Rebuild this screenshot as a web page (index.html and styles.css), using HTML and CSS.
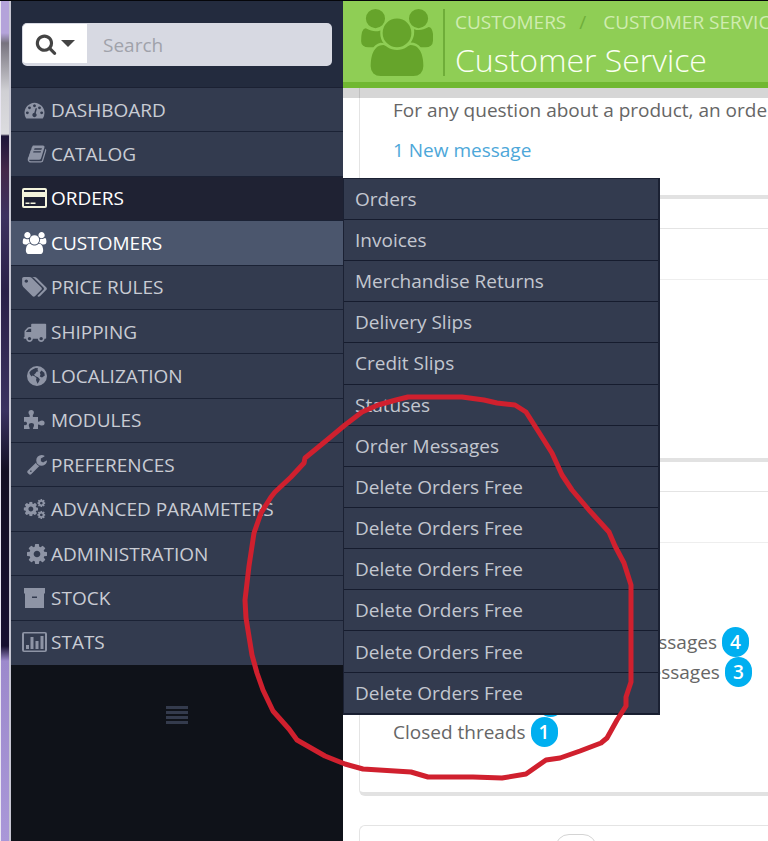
FILE: index.html
```html
<!DOCTYPE html>
<html lang="en">
<head>
<meta charset="utf-8">
<title>Customer Service</title>
<link rel="stylesheet" href="styles.css">
</head>
<body>
<svg class="defs" aria-hidden="true">
  <symbol id="i-search" viewBox="0 0 1792 1792"><path d="M1216 832q0-185-131.500-316.500t-316.500-131.500-316.500 131.500-131.500 316.500 131.500 316.500 316.500 131.500 316.500-131.500 131.500-316.500zm512 832q0 52-38 90t-90 38q-54 0-90-38l-343-342q-179 124-399 124-143 0-273.500-55.500t-225-150-150-225-55.500-273.500 55.500-273.500 150-225 225-150 273.500-55.500 273.500 55.500 225 150 150 225 55.500 273.500q0 220-124 399l343 343q37 37 37 90z"/></symbol>
  <symbol id="i-dashboard" viewBox="0 0 1792 1792"><path d="M384 1152q0-53-37.500-90.500t-90.500-37.500-90.500 37.500-37.500 90.500 37.500 90.500 90.500 37.500 90.500-37.500 37.500-90.500zm192-448q0-53-37.500-90.500t-90.500-37.500-90.500 37.500-37.500 90.500 37.500 90.500 90.500 37.500 90.500-37.500 37.500-90.500zm428 481l101-382q6-26-7.500-48.500t-38.500-29.500-48 6.500-30 39.500l-101 382q-60 5-107 43.500t-63 98.500q-20 77 20 146t117 89 146-20 89-117q16-60-6-117t-72-91zm660-33q0-53-37.500-90.500t-90.500-37.500-90.500 37.500-37.500 90.500 37.500 90.500 90.500 37.500 90.500-37.500 37.500-90.500zm-640-640q0-53-37.500-90.500t-90.500-37.500-90.500 37.500-37.500 90.500 37.500 90.500 90.500 37.500 90.500-37.500 37.500-90.500zm448 192q0-53-37.500-90.500t-90.500-37.500-90.500 37.500-37.500 90.500 37.500 90.500 90.500 37.500 90.500-37.500 37.500-90.500zm320 448q0 261-141 483-19 29-54 29h-1402q-35 0-54-29-141-221-141-483 0-182 71-348t191-286 286-191 348-71 348 71 286 191 191 286 71 348z"/></symbol>
  <symbol id="i-book" viewBox="0 0 1792 1792"><path d="M1703 478q40 57 18 129l-275 906q-19 64-76.500 107.500t-122.500 43.500h-923q-77 0-148.500-53.500t-99.500-131.500q-24-67-2-127 0-4 3-27t4-37q1-8-3-21.500t-3-19.500q2-11 8-21t16.500-23.500 16.500-23.500q23-38 45-91.500t30-91.500q3-10 .5-30t-.5-28q3-11 17-28t17-23q21-36 42-92t25-90q1-9-2.500-32t.5-28q4-13 22-30.500t22-22.500q19-26 42.500-84.500t27.500-96.500q1-8-3-25.500t-2-26.500q2-8 9-18t18-23 17-21q8-12 16.500-30.500t15-35 16-36 19.500-32 26.500-23.500 36-11.500 47.500 5.500l-1 3q38-9 51-9h761q74 0 114 56t18 130l-274 906q-36 119-71.500 153.500t-128.500 34.500h-869q-27 0-38 15-11 16-1 43 24 70 144 70h923q29 0 56-15.500t35-41.500l300-987q7-22 5-57 38 15 59 43zm-1064 2q-4 13 2 22.500t20 9.500h608q13 0 25.500-9.500t16.500-22.500l21-64q4-13-2-22.500t-20-9.500h-608q-13 0-25.500 9.500t-16.500 22.500zm-83 256q-4 13 2 22.500t20 9.500h608q13 0 25.500-9.500t16.500-22.500l21-64q4-13-2-22.500t-20-9.500h-608q-13 0-25.500 9.500t-16.500 22.500z"/></symbol>
  <symbol id="i-card" viewBox="0 0 25 20"><path fill-rule="evenodd" d="M2 0h21a2 2 0 0 1 2 2v16a2 2 0 0 1-2 2H2a2 2 0 0 1-2-2V2a2 2 0 0 1 2-2zm0 2v2h21V2zm0 7v9h21V9zM3.500 14.500h4V16h-4zm5 0h5V16h-5z"/></symbol>
  <symbol id="i-users" viewBox="64 0 1920 1792"><path d="M657 896q-162 5-265 128h-134q-82 0-138-40.500t-56-118.500q0-353 124-353 6 0 43.500 21t97.500 42.500 119 21.500q67 0 133-23-5 37-5 66 0 159 93 289zm1071 637q0 120-73 189.500t-194 69.500h-874q-121 0-194-69.500t-73-189.500q0-53 3.500-103.500t14-109 26.500-108.500 43-97.500 62-81 85.500-53.500 111.500-20q10 0 43 21.500t73 48 107 48 135 21.500 135-21.500 107-48 73-48 43-21.500q61 0 111.500 20t85.500 53.500 62 81 43 97.500 26.500 108.500 14 109 3.500 103.500zm-1024-1277q0 106-75 181t-181 75-181-75-75-181 75-181 181-75 181 75 75 181zm704 384q0 159-112.500 271.500t-271.500 112.500-271.500-112.500-112.500-271.500 112.500-271.500 271.500-112.500 271.500 112.500 112.500 271.500zm576 225q0 78-56 118.500t-138 40.500h-134q-103-123-265-128 93-130 93-289 0-29-5-66 66 23 133 23 59 0 119-21.500t97.500-42.500 43.500-21q124 0 124 353zm-128-609q0 106-75 181t-181 75-181-75-75-181 75-181 181-75 181 75 75 181z"/></symbol>
  <symbol id="i-tags" viewBox="0 128 1900 1536"><path d="M448 448q0-53-37.500-90.500t-90.500-37.500-90.500 37.500-37.500 90.500 37.500 90.500 90.500 37.500 90.500-37.500 37.500-90.500zm1067 576q0 53-37 90l-491 492q-39 37-91 37-53 0-90-37l-715-716q-38-37-64.500-101t-26.500-117v-416q0-52 38-90t90-38h416q53 0 117 26.500t102 64.500l715 714q37 39 37 91zm384 0q0 53-37 90l-491 492q-39 37-91 37-36 0-59-14t-53-45l470-470q37-37 37-90 0-52-37-91l-715-714q-38-38-102-64.500t-117-26.500h224q53 0 117 26.500t102 64.500l715 714q37 39 37 91z"/></symbol>
  <symbol id="i-truck" viewBox="0 128 1792 1536"><path d="M640 1408q0-52-38-90t-90-38-90 38-38 90 38 90 90 38 90-38 38-90zm-384-512h384v-256h-158q-13 0-22 9l-195 195q-9 9-9 22v30zm1280 512q0-52-38-90t-90-38-90 38-38 90 38 90 90 38 90-38 38-90zm256-1088v1024q0 15-4 26.500t-13.500 18.500-16.500 11.500-23.500 6-22.500 2-25.500 0-22.500-.5q0 106-75 181t-181 75-181-75-75-181h-384q0 106-75 181t-181 75-181-75-75-181h-64q-3 0-22.500.5t-25.500 0-22.500-2-23.500-6-16.500-11.500-13.500-18.500-4-26.500q0-26 19-45t45-19v-320q0-8-.5-35t0-38 2.500-34.500 6.500-37 14-30.500 22.500-30l198-198q19-19 50.500-32t58.500-13h160v-192q0-26 19-45t45-19h1024q26 0 45 19t19 45z"/></symbol>
  <symbol id="i-globe" viewBox="0 0 20 20"><path fill-rule="evenodd" d="M10 0a10 10 0 1 1 0 20a10 10 0 0 1 0-20zM11 2.200L8.500 2 6 3.200 4 4.500 2.400 6.500 3 8.500 4.500 10.500 5.500 9.500 7.500 10.300 9.500 12 9 14 10.500 17.800 12 15.500 12.800 13.200 11 11.200 8.500 10.200 7 8.800 8.600 7.200 9.500 5.800 11.500 5.300 10.500 4zM14.500 4.500L12.800 6.500 13.500 8.500 12.800 10.500 15 11.500 17.800 9.500 17.300 6.800z"/></symbol>
  <symbol id="i-puzzle" viewBox="0 0 21 20"><path d="M0 7h5.500C6.500 5.500 4.500 4.500 4.500 2.600a2.700 2.600 0 0 1 5.400 0C9.900 4.500 8 5.500 9 7h5v4.500c1.300.8 2-.9 4-.9a2.500 2.400 0 0 1 0 5c-2 0-2.700-1.700-4-.9V19H9.200c-.8-1.200.8-2 .8-3.600a2.600 2.400 0 0 0-5.200 0c0 1.600 1.500 2.400.7 3.600H0v-4c1.400.4 3 .3 3-1.500s-1.600-2-3-1.500z"/></symbol>
  <symbol id="i-wrench" viewBox="64 128 1664 1664"><path d="M448 1472q0-26-19-45t-45-19-45 19-19 45 19 45 45 19 45-19 19-45zm644-420l-682 682q-37 37-90 37-52 0-91-37l-106-108q-38-36-38-90 0-53 38-91l681-681q39 98 114.500 173.500t173.500 114.500zm634-435q0 39-23 106-47 134-164.500 217.500t-258.500 83.500q-185 0-316.500-131.500t-131.500-316.500 131.500-316.500 316.500-131.500q58 0 121.500 16.500t107.500 46.500q16 11 16 28t-16 28l-293 169v224l193 107q5-3 79-48.500t135.500-81 70.500-35.500q15 0 23.500 10t8.500 25z"/></symbol>
  <symbol id="i-cog" viewBox="128 128 1536 1536"><path d="M1152 896q0-106-75-181t-181-75-181 75-75 181 75 181 181 75 181-75 75-181zm512-109v222q0 12-8 23t-20 13l-185 28q-19 54-39 91 35 50 107 138 10 12 10 25t-9 23q-27 37-99 108t-94 71q-12 0-26-9l-138-108q-44 23-91 38-16 136-29 186-7 28-36 28h-222q-14 0-24.500-8.500t-11.500-21.500l-28-184q-49-16-90-37l-141 107q-10 9-25 9-14 0-25-11-126-114-165-168-7-10-7-23 0-12 8-23 15-21 51-66.500t54-70.500q-27-50-41-99l-183-27q-13-2-21-12.500t-8-23.500v-222q0-12 8-23t19-13l186-28q14-46 39-92-40-57-107-138-10-12-10-24 0-10 9-23 26-36 98.500-107.500t94.500-71.500q13 0 26 10l138 107q44-23 91-38 16-136 29-186 7-28 36-28h222q14 0 24.500 8.500t11.500 21.500l28 184q49 16 90 37l142-107q9-9 24-9 13 0 25 10 129 119 165 170 7 8 7 22 0 12-8 23-15 21-51 66.500t-54 70.500q26 50 41 98l183 28q13 2 21 12.500t8 23.500z"/></symbol>
  <symbol id="i-cogs" viewBox="0 0 24 22"><use href="#i-cog" x="0" y="3" width="16" height="16"/><use href="#i-cog" x="15" y="0" width="9" height="9"/><use href="#i-cog" x="15" y="13" width="9" height="9"/></symbol>
  <symbol id="i-archive" viewBox="0 0 21 20"><path fill-rule="evenodd" d="M0 0h21v5.500H20V20H1V5.500H0zM8 8.500v1.600h5V8.500z"/></symbol>
  <symbol id="i-stats" viewBox="0 0 25 20"><path fill-rule="evenodd" d="M2 0h21a2 2 0 0 1 2 2v16a2 2 0 0 1-2 2H2a2 2 0 0 1-2-2V2a2 2 0 0 1 2-2zm0 1.500v17h21v-17zM4 13h3v4H4zm4.500-8h3v12h-3zm5 4h3v8h-3zm5-5h3v13h-3z"/></symbol>
</svg>

<div class="screen">
  <div class="desktop-edge"></div>

  <aside class="sidebar">
    <form class="search" role="search">
      <button class="search-scope" type="button" aria-label="Search scope">
        <svg class="search-icon"><use href="#i-search"/></svg>
        <span class="caret"></span>
      </button>
      <input class="search-input" type="search" placeholder="Search" aria-label="Search">
    </form>

    <nav aria-label="Main">
      <ul class="menu">
        <li><a href="#"><svg class="icon"><use href="#i-dashboard"/></svg>DASHBOARD</a></li>
        <li><a href="#"><svg class="icon small"><use href="#i-book"/></svg>CATALOG</a></li>
        <li class="open"><a href="#"><svg class="icon"><use href="#i-card"/></svg>ORDERS</a>
          <ul class="submenu">
            <li><a href="#">Orders</a></li>
            <li><a href="#">Invoices</a></li>
            <li><a href="#">Merchandise Returns</a></li>
            <li><a href="#">Delivery Slips</a></li>
            <li><a href="#">Credit Slips</a></li>
            <li><a href="#">Statuses</a></li>
            <li><a href="#">Order Messages</a></li>
            <li><a href="#">Delete Orders Free</a></li>
            <li><a href="#">Delete Orders Free</a></li>
            <li><a href="#">Delete Orders Free</a></li>
            <li><a href="#">Delete Orders Free</a></li>
            <li><a href="#">Delete Orders Free</a></li>
            <li><a href="#">Delete Orders Free</a></li>
          </ul>
        </li>
        <li class="current"><a href="#"><svg class="icon"><use href="#i-users"/></svg>CUSTOMERS</a></li>
        <li><a href="#"><svg class="icon"><use href="#i-tags"/></svg>PRICE RULES</a></li>
        <li><a href="#"><svg class="icon"><use href="#i-truck"/></svg>SHIPPING</a></li>
        <li><a href="#"><svg class="icon small"><use href="#i-globe"/></svg>LOCALIZATION</a></li>
        <li><a href="#"><svg class="icon"><use href="#i-puzzle"/></svg>MODULES</a></li>
        <li><a href="#"><svg class="icon small"><use href="#i-wrench"/></svg>PREFERENCES</a></li>
        <li><a href="#"><svg class="icon"><use href="#i-cogs"/></svg>ADVANCED PARAMETERS</a></li>
        <li><a href="#"><svg class="icon small"><use href="#i-cog"/></svg>ADMINISTRATION</a></li>
        <li><a href="#"><svg class="icon"><use href="#i-archive"/></svg>STOCK</a></li>
        <li><a href="#"><svg class="icon"><use href="#i-stats"/></svg>STATS</a></li>
      </ul>
    </nav>
    <button class="collapse" type="button" aria-label="Collapse menu"><span></span><span></span><span></span><span></span></button>
  </aside>

  <main class="main">
    <header class="page-head">
      <svg class="head-icon"><use href="#i-users"/></svg>
      <div class="head-text">
        <ol class="crumbs">
          <li><a href="#">CUSTOMERS</a></li>
          <li class="slash">/</li>
          <li><a href="#">CUSTOMER SERVICE</a></li>
        </ol>
        <h1>Customer Service</h1>
      </div>
    </header>

    <div class="panels">
      <section class="panel intro">
        <p>For any question about a product, an order</p>
        <p><a href="#">1 New message</a></p>
      </section>
      <section class="panel middle"><div class="panel-head"></div></section>
      <section class="panel stats">
        <div class="panel-head"></div>
        <div class="stats-body">
          <ul class="threads">
            <li><span class="badge"></span></li>
            <li>Closed threads <span class="badge">1</span></li>
          </ul>
          <ul class="messages">
            <li>customer messages <span class="badge">4</span></li>
            <li>employee messages <span class="badge">3</span></li>
          </ul>
        </div>
      </section>
      <section class="panel last"><div class="knob"></div></section>
    </div>
  </main>

  <svg class="ink" viewBox="0 0 768 841" aria-hidden="true"><path d="M345 425L362 412 378 405 396 400 408 397H462L484 400 497 403 515 405 526 412 540 434 552 453 562 475 572 490 589 510 609 532 615 546 624 563 631 585V682L626 697V706L617 720 607 738 601 743 580 751 560 758 546 760 526 774 502 778 473 777H428L411 772 363 769 345 764 325 756 297 740 289 729 273 711 263 690 257 673 252 655 246 618 245 600 249 566 254 533 261 513 271 497 275 492 291 477 304 463 305 458 327 440Z"/></svg>
</div>
</body>
</html>
```
FILE: styles.css
```css
* { box-sizing: border-box; }

body {
  margin: 0;
  background: #fff;
  font-family: "Open Sans", "Liberation Sans", sans-serif;
  font-size: 19px;
  color: #666;
}

ul, ol { list-style: none; margin: 0; padding: 0; }
a { color: inherit; text-decoration: none; }
p, h1 { margin: 0; }
button { border: 0; padding: 0; font: inherit; }
svg { fill: currentColor; }

.defs { position: absolute; width: 0; height: 0; }

.screen {
  position: relative;
  display: flex;
  height: 100vh;
  overflow: hidden;
  border-top: 1px solid #05060a;
}

.desktop-edge {
  flex: 0 0 11px;
  border-left: 1px solid #e9e6f2;
  border-right: 2px solid #c6c6d2;
  background: linear-gradient(#b4a3da 0, #b4a3da 32px, #77737f 42px, #d0d0d4 90px, #dcdcdf 133px, #1d1538 135px, #44284a 170px, #3d3260 215px, #2a2048 290px, #3a3260 410px, #141024 470px, #171030 645px, #9c89cc 660px, #a997d8 100%);
}

/* Sidebar */
.sidebar {
  flex: 0 0 332px;
  min-width: 0;
  background: #0f1219;
  display: flex;
  flex-direction: column;
}

.search {
  display: flex;
  padding: 22px 11px 21px;
  background: #232b3e;
  border-bottom: 1px solid #1b2133;
}

.search-scope {
  flex: 0 0 66px;
  height: 43px;
  display: flex;
  align-items: center;
  justify-content: center;
  gap: 4px;
  background: #fff;
  border: 1px solid #d7d9e2;
  border-bottom-width: 3px;
  border-radius: 5px 0 0 5px;
  color: #444;
}
.search-icon { width: 22px; height: 22px; }
.caret {
  border: 7px solid transparent;
  border-top-color: #444;
  border-bottom: 0;
}

.search-input {
  flex: 1;
  min-width: 0;
  width: 100%;
  height: 43px;
  padding: 0 15px;
  border: 0;
  border-radius: 0 5px 5px 0;
  background: #d7d9e2;
  font: inherit;
  color: #555;
}
.search-input::placeholder { color: #a0a2aa; opacity: 1; }

.menu {
  display: grid;
  grid-auto-rows: 1fr;
  min-height: 577px;
}
.menu > li {
  position: relative;
  display: grid;
  background: #333b4f;
  border-bottom: 1px solid #1b2235;
  color: #c9ccd4;
}
.menu > li:last-child { border-bottom-color: #333b4f; }
.menu > li > a {
  display: flex;
  align-items: center;
  gap: 4px;
  padding-left: 11px;
}
.icon { width: 25px; height: 20px; color: #8e94a5; }
.icon.small { width: 20px; margin-left: 5px; }
.menu > .open { background: #1f2233; color: #fff; }
.menu > .current { background: #4b566d; color: #fff; }
.open .icon { color: #f4f4dc; }
.current .icon { color: #fff; height: 22px; }

.submenu {
  position: absolute;
  z-index: 3;
  left: 100%;
  top: 1px;
  width: 317px;
  min-height: 537px;
  display: grid;
  grid-auto-rows: 1fr;
  border: 1px solid #1b2133;
  border-right-width: 2px;
  color: #c3c7d0;
}
.submenu li {
  display: grid;
  background: #333b4f;
  border-bottom: 1px solid #161c2e;
}
.submenu a { display: flex; align-items: center; padding-left: 11px; }

.collapse {
  align-self: center;
  margin-top: 41px;
  width: 22px;
  display: grid;
  gap: 2px;
  background: none;
}
.collapse span { height: 3px; background: #343b4d; }

/* Page header */
.main { flex: 1; min-width: 0; background: #fff; }

.page-head {
  position: relative;
  z-index: 2;
  display: flex;
  height: 87px;
  padding: 8px 0 0 18px;
  background: #8fce55;
  border-bottom: 6px solid #70b831;
  box-shadow: 0 10px 0 rgba(0, 0, 0, .16);
}
.head-icon { flex: none; width: 72px; height: 67px; color: #66a42b; }
.head-text {
  margin-left: 10px;
  padding-left: 10px;
  height: 67px;
  border-left: 2px solid #6fad39;
  white-space: nowrap;
}
.crumbs { display: flex; line-height: 26px; color: #cfecb0; }
.slash { margin: 0 17px 0 13px; color: #6fae3b; }
h1 { font-size: 32px; font-weight: 300; line-height: 50px; color: #fafff2; }

/* Panels */
.panels { padding-left: 16px; display: grid; gap: 29px; }
.panel {
  border: 1px solid #e4e4e4;
  border-right: 0;
  border-bottom: 4px solid #e2e2e2;
  border-radius: 6px 0 0 6px;
}
.panel-head { height: 51px; border-bottom: 1px solid #eee; }

.intro {
  padding: 2px 0 25px 33px;
  border-top: 0;
  border-top-left-radius: 0;
  line-height: 40px;
  white-space: nowrap;
}
.intro a { color: #4da7d9; }

.middle { min-height: 234px; }

.stats-body {
  display: grid;
  grid-template-columns: 148px 1fr;
  padding: 84px 0 45px 33px;
  line-height: 30px;
  white-space: nowrap;
}
.threads { padding-top: 60px; }
.threads li:first-child { padding-left: 144px; }
.badge {
  display: inline-block;
  min-width: 27px;
  height: 30px;
  padding: 0 8px;
  border-radius: 14px;
  background: #00aff0;
  color: #fff;
  font-weight: 600;
  text-align: center;
  vertical-align: top;
}

.last { height: 120px; display: flex; }
.knob {
  margin: 8px 0 0 195px;
  width: 42px;
  height: 42px;
  border: 1px solid #d4d4d4;
  border-radius: 14px;
}

/* Hand-drawn loop over the page */
.ink {
  position: absolute;
  z-index: 4;
  left: 0;
  top: -1px;
  width: 768px;
  height: 841px;
  pointer-events: none;
}
.ink path {
  fill: none;
  stroke: #d0202e;
  stroke-width: 5px;
  stroke-linejoin: round;
}
```
